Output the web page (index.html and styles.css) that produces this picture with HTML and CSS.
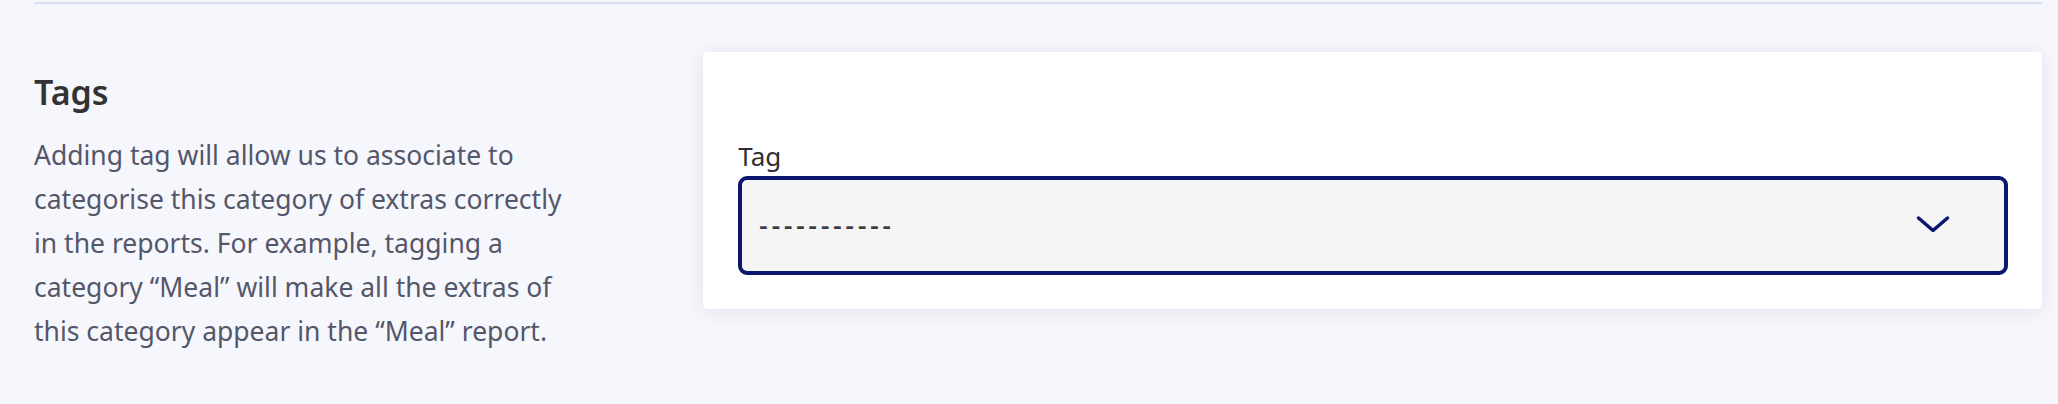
FILE: index.html
```html
<!DOCTYPE html>
<html lang="en">
    <head>
        <meta charset="UTF-8">
        <meta name="viewport" content="width=device-width, initial-scale=1.0">
        <title>Extras Category - Tags</title>
        <link rel="stylesheet" href="styles.css">
    </head>
    <body>
        <div class="page">
            <hr class="divider">
            <div class="section">
                <div class="section-info">
                    <h2 class="section-title">Tags</h2>
                    <p class="section-text">Adding tag will allow us to associate to categorise this category of extras correctly in the reports. For example, tagging a category “Meal” will make all the extras of this category appear in the “Meal” report.</p>
                </div>
                <div class="card">
                    <label for="tag" class="field-label">Tag</label>
                    <div class="select-wrap">
                        <select id="tag" name="tag" class="select">
                            <option value="">-----------</option>
                            <option value="meal">Meal</option>
                            <option value="drink">Drink</option>
                        </select>
                        <svg class="select-arrow" width="36" height="20" viewBox="0 0 36 20">
                            <polyline points="3.5,4 18,16.5 32.5,4" fill="none" stroke="#0b166f" stroke-width="3.5" stroke-linecap="round" stroke-linejoin="round"/>
                        </svg>
                    </div>
                </div>
            </div>
        </div>
    </body>
</html>
```

FILE: styles.css
```css
body {
    font-family: "Noto Sans", "Open Sans", sans-serif;
    background-color: #f6f7fc;
    margin: 0;
    padding: 0;
}

.page {
    padding: 2px 16px 0 34px;
}

.divider {
    margin: 0;
    border: none;
    height: 2px;
    background-color: #dadef5;
}

.section {
    display: grid;
    grid-template-columns: 1fr 2fr;
    align-items: start;
    margin-top: 48px;
}

.section-info {
    padding-top: 20px;
}

.section-title {
    margin: 0;
    font-size: 34px;
    line-height: 40px;
    font-weight: 600;
    color: #333;
}

.section-text {
    max-width: 548px;
    margin: 21px 0 0 0;
    font-size: 26.5px;
    line-height: 44px;
    color: #54566a;
}

.card {
    background-color: #fff;
    border-radius: 5px;
    padding: 89px 34px 34px 35px;
    box-shadow: 0 2px 18px rgba(40, 50, 100, 0.1);
}

.field-label {
    display: block;
    font-size: 26px;
    line-height: 30px;
    color: #2e2e36;
    margin-bottom: 5px;
}

.select-wrap {
    position: relative;
}

.select {
    display: block;
    width: 100%;
    height: 99px;
    padding: 0 0 3px 17px;
    border: 4px solid #0b166f;
    border-radius: 9px;
    background-color: #f5f5f5;
    font-family: "Noto Sans", sans-serif;
    font-size: 26px;
    font-weight: 600;
    letter-spacing: 4px;
    color: #3b3b46;
    appearance: none;
    -webkit-appearance: none;
    outline: none;
}

.select-arrow {
    position: absolute;
    right: 57px;
    top: 38px;
    pointer-events: none;
}
```
